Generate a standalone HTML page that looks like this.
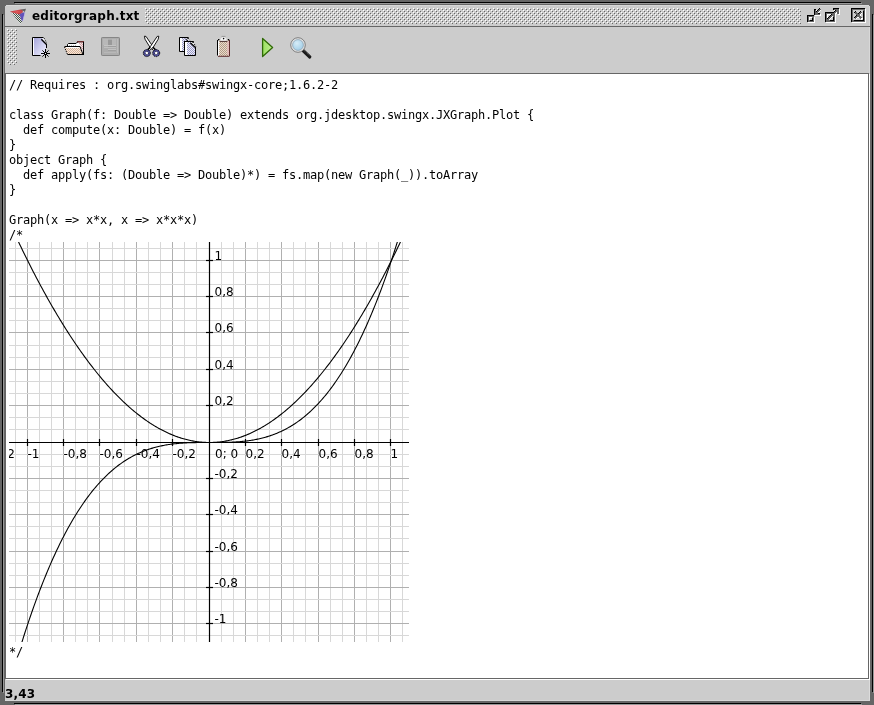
<!DOCTYPE html>
<html lang="en"><head><meta charset="utf-8"><title>editorgraph.txt</title>
<style>
html,body{margin:0;padding:0;}
body{-webkit-font-smoothing:antialiased;width:874px;height:705px;overflow:hidden;background:#666;position:relative;font-family:"DejaVu Sans","Liberation Sans",sans-serif;}
svg{position:absolute;left:0;top:0;display:block;}
.title,.status,pre.code,.graph{will-change:transform;}
.title{position:absolute;left:31.6px;top:9px;letter-spacing:0.22px;height:15px;line-height:15px;font:bold 12px/15px "DejaVu Sans","Liberation Sans",sans-serif;color:#000;white-space:pre;}
.status{position:absolute;left:5px;top:687px;letter-spacing:0.15px;font:bold 12px/15px "DejaVu Sans","Liberation Sans",sans-serif;color:#000;white-space:pre;}
pre.code{position:absolute;margin:0;left:9px;font:12px/15px "DejaVu Sans Mono","Liberation Mono",monospace;letter-spacing:-0.224px;color:#000;white-space:pre;}
#c1{top:78px;}
#c2{top:645px;}
.graph{position:absolute;left:9px;top:242px;width:400px;height:400px;overflow:hidden;background:#fff;}
.graph text{font:12px "DejaVu Sans","Liberation Sans",sans-serif;fill:#000;}
</style></head>
<body>
<svg class="chrome" width="874" height="705" viewBox="0 0 874 705" shape-rendering="crispEdges"><rect x="0" y="0" width="874" height="705" fill="#666"/><rect x="15" y="3" width="847" height="1" fill="#999"/><rect x="3" y="15" width="1" height="678" fill="#999"/><rect x="873" y="15" width="1" height="678" fill="#999"/><rect x="15" y="704" width="847" height="1" fill="#999"/><rect x="14" y="2" width="847" height="1" fill="#000"/><rect x="2" y="14" width="1" height="678" fill="#000"/><rect x="872" y="14" width="1" height="678" fill="#000"/><rect x="14" y="703" width="847" height="1" fill="#000"/><rect x="5" y="5" width="865" height="696" fill="#ccc"/><rect x="5" y="26" width="865" height="1" fill="#666"/><rect x="5" y="5" width="1" height="1" fill="#666"/><rect x="869" y="5" width="1" height="1" fill="#666"/><defs><pattern id="bp" width="4" height="4" patternUnits="userSpaceOnUse"><rect x="0" y="0" width="1" height="1" fill="#fff"/><rect x="2" y="2" width="1" height="1" fill="#fff"/><rect x="1" y="1" width="1" height="1" fill="#666"/><rect x="3" y="3" width="1" height="1" fill="#666"/></pattern></defs><g transform="translate(145,8)"><rect x="0" y="0" width="656" height="16" fill="url(#bp)"/></g><g transform="translate(7,29)"><rect x="0" y="0" width="10" height="36" fill="url(#bp)"/></g><rect x="819" y="8" width="1" height="1" fill="#000000"/><rect x="814" y="9" width="2" height="1" fill="#000000"/><rect x="818" y="9" width="1" height="1" fill="#000000"/><rect x="819" y="9" width="2" height="1" fill="#666666"/><rect x="814" y="10" width="1" height="1" fill="#000000"/><rect x="815" y="10" width="1" height="1" fill="#666666"/><rect x="816" y="10" width="1" height="1" fill="#ffffff"/><rect x="817" y="10" width="1" height="1" fill="#000000"/><rect x="818" y="10" width="2" height="1" fill="#666666"/><rect x="820" y="10" width="1" height="1" fill="#ffffff"/><rect x="814" y="11" width="1" height="1" fill="#000000"/><rect x="815" y="11" width="1" height="1" fill="#666666"/><rect x="816" y="11" width="1" height="1" fill="#000000"/><rect x="817" y="11" width="2" height="1" fill="#666666"/><rect x="819" y="11" width="1" height="1" fill="#ffffff"/><rect x="814" y="12" width="1" height="1" fill="#000000"/><rect x="815" y="12" width="3" height="1" fill="#666666"/><rect x="818" y="12" width="1" height="1" fill="#ffffff"/><rect x="814" y="13" width="1" height="1" fill="#000000"/><rect x="815" y="13" width="3" height="1" fill="#666666"/><rect x="818" y="13" width="2" height="1" fill="#000000"/><rect x="814" y="14" width="1" height="1" fill="#000000"/><rect x="815" y="14" width="5" height="1" fill="#666666"/><rect x="820" y="14" width="1" height="1" fill="#ffffff"/><rect x="807" y="15" width="7" height="1" fill="#000000"/><rect x="815" y="15" width="6" height="1" fill="#ffffff"/><rect x="807" y="16" width="1" height="1" fill="#000000"/><rect x="808" y="16" width="6" height="1" fill="#666666"/><rect x="807" y="17" width="1" height="1" fill="#000000"/><rect x="808" y="17" width="1" height="1" fill="#666666"/><rect x="809" y="17" width="3" height="1" fill="#ffffff"/><rect x="812" y="17" width="2" height="1" fill="#666666"/><rect x="814" y="17" width="1" height="1" fill="#ffffff"/><rect x="807" y="18" width="1" height="1" fill="#000000"/><rect x="808" y="18" width="1" height="1" fill="#666666"/><rect x="809" y="18" width="1" height="1" fill="#ffffff"/><rect x="812" y="18" width="1" height="1" fill="#000000"/><rect x="813" y="18" width="1" height="1" fill="#666666"/><rect x="814" y="18" width="1" height="1" fill="#ffffff"/><rect x="807" y="19" width="1" height="1" fill="#000000"/><rect x="808" y="19" width="1" height="1" fill="#666666"/><rect x="809" y="19" width="1" height="1" fill="#ffffff"/><rect x="812" y="19" width="1" height="1" fill="#000000"/><rect x="813" y="19" width="1" height="1" fill="#666666"/><rect x="814" y="19" width="1" height="1" fill="#ffffff"/><rect x="807" y="20" width="1" height="1" fill="#000000"/><rect x="808" y="20" width="2" height="1" fill="#666666"/><rect x="810" y="20" width="3" height="1" fill="#000000"/><rect x="813" y="20" width="1" height="1" fill="#666666"/><rect x="814" y="20" width="1" height="1" fill="#ffffff"/><rect x="807" y="21" width="1" height="1" fill="#000000"/><rect x="808" y="21" width="6" height="1" fill="#666666"/><rect x="814" y="21" width="1" height="1" fill="#ffffff"/><rect x="808" y="22" width="7" height="1" fill="#ffffff"/><rect x="833" y="8" width="6" height="1" fill="#000000"/><rect x="833" y="9" width="1" height="1" fill="#000000"/><rect x="834" y="9" width="5" height="1" fill="#666666"/><rect x="839" y="9" width="1" height="1" fill="#ffffff"/><rect x="834" y="10" width="1" height="1" fill="#ffffff"/><rect x="835" y="10" width="1" height="1" fill="#000000"/><rect x="836" y="10" width="3" height="1" fill="#666666"/><rect x="839" y="10" width="1" height="1" fill="#ffffff"/><rect x="834" y="11" width="1" height="1" fill="#000000"/><rect x="835" y="11" width="4" height="1" fill="#666666"/><rect x="839" y="11" width="1" height="1" fill="#ffffff"/><rect x="825" y="12" width="9" height="1" fill="#000000"/><rect x="834" y="12" width="2" height="1" fill="#666666"/><rect x="836" y="12" width="1" height="1" fill="#ffffff"/><rect x="837" y="12" width="2" height="1" fill="#666666"/><rect x="839" y="12" width="1" height="1" fill="#ffffff"/><rect x="825" y="13" width="1" height="1" fill="#000000"/><rect x="826" y="13" width="9" height="1" fill="#666666"/><rect x="835" y="13" width="2" height="1" fill="#ffffff"/><rect x="837" y="13" width="2" height="1" fill="#666666"/><rect x="839" y="13" width="1" height="1" fill="#ffffff"/><rect x="825" y="14" width="1" height="1" fill="#000000"/><rect x="826" y="14" width="1" height="1" fill="#666666"/><rect x="827" y="14" width="4" height="1" fill="#ffffff"/><rect x="831" y="14" width="1" height="1" fill="#000000"/><rect x="832" y="14" width="3" height="1" fill="#666666"/><rect x="835" y="14" width="1" height="1" fill="#ffffff"/><rect x="838" y="14" width="2" height="1" fill="#ffffff"/><rect x="825" y="15" width="1" height="1" fill="#000000"/><rect x="826" y="15" width="1" height="1" fill="#666666"/><rect x="827" y="15" width="1" height="1" fill="#ffffff"/><rect x="830" y="15" width="1" height="1" fill="#000000"/><rect x="831" y="15" width="4" height="1" fill="#666666"/><rect x="835" y="15" width="1" height="1" fill="#ffffff"/><rect x="825" y="16" width="1" height="1" fill="#000000"/><rect x="826" y="16" width="1" height="1" fill="#666666"/><rect x="827" y="16" width="1" height="1" fill="#ffffff"/><rect x="829" y="16" width="1" height="1" fill="#000000"/><rect x="830" y="16" width="2" height="1" fill="#666666"/><rect x="832" y="16" width="1" height="1" fill="#ffffff"/><rect x="833" y="16" width="2" height="1" fill="#666666"/><rect x="835" y="16" width="1" height="1" fill="#ffffff"/><rect x="825" y="17" width="1" height="1" fill="#000000"/><rect x="826" y="17" width="1" height="1" fill="#666666"/><rect x="827" y="17" width="1" height="1" fill="#ffffff"/><rect x="828" y="17" width="1" height="1" fill="#000000"/><rect x="829" y="17" width="2" height="1" fill="#666666"/><rect x="831" y="17" width="1" height="1" fill="#ffffff"/><rect x="833" y="17" width="1" height="1" fill="#000000"/><rect x="834" y="17" width="1" height="1" fill="#666666"/><rect x="835" y="17" width="1" height="1" fill="#ffffff"/><rect x="825" y="18" width="1" height="1" fill="#000000"/><rect x="826" y="18" width="1" height="1" fill="#666666"/><rect x="827" y="18" width="1" height="1" fill="#000000"/><rect x="828" y="18" width="2" height="1" fill="#666666"/><rect x="830" y="18" width="1" height="1" fill="#ffffff"/><rect x="833" y="18" width="1" height="1" fill="#000000"/><rect x="834" y="18" width="1" height="1" fill="#666666"/><rect x="835" y="18" width="1" height="1" fill="#ffffff"/><rect x="825" y="19" width="1" height="1" fill="#000000"/><rect x="826" y="19" width="3" height="1" fill="#666666"/><rect x="829" y="19" width="1" height="1" fill="#ffffff"/><rect x="833" y="19" width="1" height="1" fill="#000000"/><rect x="834" y="19" width="1" height="1" fill="#666666"/><rect x="835" y="19" width="1" height="1" fill="#ffffff"/><rect x="825" y="20" width="1" height="1" fill="#000000"/><rect x="826" y="20" width="4" height="1" fill="#666666"/><rect x="830" y="20" width="4" height="1" fill="#000000"/><rect x="834" y="20" width="1" height="1" fill="#666666"/><rect x="835" y="20" width="1" height="1" fill="#ffffff"/><rect x="825" y="21" width="1" height="1" fill="#000000"/><rect x="826" y="21" width="9" height="1" fill="#666666"/><rect x="835" y="21" width="1" height="1" fill="#ffffff"/><rect x="826" y="22" width="10" height="1" fill="#ffffff"/><rect x="851" y="8" width="14" height="1" fill="#000000"/><rect x="851" y="9" width="1" height="1" fill="#000000"/><rect x="852" y="9" width="13" height="1" fill="#666666"/><rect x="865" y="9" width="1" height="1" fill="#ffffff"/><rect x="851" y="10" width="1" height="1" fill="#000000"/><rect x="852" y="10" width="1" height="1" fill="#666666"/><rect x="863" y="10" width="2" height="1" fill="#666666"/><rect x="865" y="10" width="1" height="1" fill="#ffffff"/><rect x="851" y="11" width="1" height="1" fill="#000000"/><rect x="852" y="11" width="1" height="1" fill="#666666"/><rect x="855" y="11" width="1" height="1" fill="#000000"/><rect x="860" y="11" width="1" height="1" fill="#000000"/><rect x="863" y="11" width="1" height="1" fill="#000000"/><rect x="864" y="11" width="1" height="1" fill="#666666"/><rect x="865" y="11" width="1" height="1" fill="#ffffff"/><rect x="851" y="12" width="1" height="1" fill="#000000"/><rect x="852" y="12" width="1" height="1" fill="#666666"/><rect x="854" y="12" width="1" height="1" fill="#000000"/><rect x="855" y="12" width="2" height="1" fill="#666666"/><rect x="859" y="12" width="1" height="1" fill="#000000"/><rect x="860" y="12" width="2" height="1" fill="#666666"/><rect x="863" y="12" width="1" height="1" fill="#000000"/><rect x="864" y="12" width="1" height="1" fill="#666666"/><rect x="865" y="12" width="1" height="1" fill="#ffffff"/><rect x="851" y="13" width="1" height="1" fill="#000000"/><rect x="852" y="13" width="1" height="1" fill="#666666"/><rect x="855" y="13" width="3" height="1" fill="#666666"/><rect x="858" y="13" width="1" height="1" fill="#000000"/><rect x="859" y="13" width="2" height="1" fill="#666666"/><rect x="861" y="13" width="1" height="1" fill="#ffffff"/><rect x="863" y="13" width="1" height="1" fill="#000000"/><rect x="864" y="13" width="1" height="1" fill="#666666"/><rect x="865" y="13" width="1" height="1" fill="#ffffff"/><rect x="851" y="14" width="1" height="1" fill="#000000"/><rect x="852" y="14" width="1" height="1" fill="#666666"/><rect x="856" y="14" width="4" height="1" fill="#666666"/><rect x="860" y="14" width="1" height="1" fill="#ffffff"/><rect x="863" y="14" width="1" height="1" fill="#000000"/><rect x="864" y="14" width="1" height="1" fill="#666666"/><rect x="865" y="14" width="1" height="1" fill="#ffffff"/><rect x="851" y="15" width="1" height="1" fill="#000000"/><rect x="852" y="15" width="1" height="1" fill="#666666"/><rect x="856" y="15" width="1" height="1" fill="#000000"/><rect x="857" y="15" width="3" height="1" fill="#666666"/><rect x="860" y="15" width="1" height="1" fill="#ffffff"/><rect x="863" y="15" width="1" height="1" fill="#000000"/><rect x="864" y="15" width="1" height="1" fill="#666666"/><rect x="865" y="15" width="1" height="1" fill="#ffffff"/><rect x="851" y="16" width="1" height="1" fill="#000000"/><rect x="852" y="16" width="1" height="1" fill="#666666"/><rect x="855" y="16" width="1" height="1" fill="#000000"/><rect x="856" y="16" width="5" height="1" fill="#666666"/><rect x="863" y="16" width="1" height="1" fill="#000000"/><rect x="864" y="16" width="1" height="1" fill="#666666"/><rect x="865" y="16" width="1" height="1" fill="#ffffff"/><rect x="851" y="17" width="1" height="1" fill="#000000"/><rect x="852" y="17" width="1" height="1" fill="#666666"/><rect x="854" y="17" width="1" height="1" fill="#000000"/><rect x="855" y="17" width="2" height="1" fill="#666666"/><rect x="857" y="17" width="2" height="1" fill="#ffffff"/><rect x="859" y="17" width="3" height="1" fill="#666666"/><rect x="863" y="17" width="1" height="1" fill="#000000"/><rect x="864" y="17" width="1" height="1" fill="#666666"/><rect x="865" y="17" width="1" height="1" fill="#ffffff"/><rect x="851" y="18" width="1" height="1" fill="#000000"/><rect x="852" y="18" width="1" height="1" fill="#666666"/><rect x="855" y="18" width="1" height="1" fill="#666666"/><rect x="856" y="18" width="1" height="1" fill="#ffffff"/><rect x="860" y="18" width="1" height="1" fill="#666666"/><rect x="861" y="18" width="2" height="1" fill="#ffffff"/><rect x="863" y="18" width="1" height="1" fill="#000000"/><rect x="864" y="18" width="1" height="1" fill="#666666"/><rect x="865" y="18" width="1" height="1" fill="#ffffff"/><rect x="851" y="19" width="1" height="1" fill="#000000"/><rect x="852" y="19" width="1" height="1" fill="#666666"/><rect x="861" y="19" width="1" height="1" fill="#ffffff"/><rect x="863" y="19" width="1" height="1" fill="#000000"/><rect x="864" y="19" width="1" height="1" fill="#666666"/><rect x="865" y="19" width="1" height="1" fill="#ffffff"/><rect x="851" y="20" width="1" height="1" fill="#000000"/><rect x="852" y="20" width="2" height="1" fill="#666666"/><rect x="854" y="20" width="10" height="1" fill="#000000"/><rect x="864" y="20" width="1" height="1" fill="#666666"/><rect x="865" y="20" width="1" height="1" fill="#ffffff"/><rect x="851" y="21" width="1" height="1" fill="#000000"/><rect x="852" y="21" width="13" height="1" fill="#666666"/><rect x="865" y="21" width="1" height="1" fill="#ffffff"/><rect x="852" y="22" width="14" height="1" fill="#ffffff"/><rect x="5" y="73" width="865" height="607" fill="#fff"/><rect x="5" y="73" width="864" height="1" fill="#666"/><rect x="5" y="73" width="1" height="606" fill="#666"/><rect x="5" y="678" width="864" height="1" fill="#666"/><rect x="868" y="73" width="1" height="606" fill="#666"/><rect x="869" y="73" width="1" height="1" fill="#ccc"/><rect x="5" y="679" width="1" height="1" fill="#ccc"/><rect x="869" y="6" width="1" height="20" fill="#d8d8d8"/><rect x="869" y="27" width="1" height="46" fill="#d8d8d8"/><rect x="869" y="680" width="1" height="21" fill="#dcdcdc"/><rect x="5" y="700" width="865" height="1" fill="#d8d8d8"/><rect x="6" y="5" width="863" height="1" fill="#d8d8d8"/></svg>
<svg class="icons" width="874" height="705" viewBox="0 0 874 705"><defs><linearGradient id="gNew" x1="0" y1="0" x2="1" y2="1"><stop offset="0" stop-color="#a4a4da"/><stop offset="1" stop-color="#f2f2ff"/></linearGradient><linearGradient id="gRun" x1="0" y1="0" x2="1" y2="0"><stop offset="0" stop-color="#9be25f"/><stop offset="1" stop-color="#c2ec94"/></linearGradient><radialGradient id="gLens" cx="0.4" cy="0.35" r="0.75"><stop offset="0" stop-color="#d6ecf7"/><stop offset="1" stop-color="#9ccbe6"/></radialGradient><pattern id="dPeach" width="2" height="2" patternUnits="userSpaceOnUse"><rect width="2" height="2" fill="#fbe8d8"/><rect x="0" y="0" width="1" height="1" fill="#d2b29c"/><rect x="1" y="1" width="1" height="1" fill="#d2b29c"/></pattern><pattern id="dPink" width="2" height="2" patternUnits="userSpaceOnUse"><rect width="2" height="2" fill="#f4e4e4"/><rect x="0" y="0" width="1" height="1" fill="#d4a4a8"/><rect x="1" y="1" width="1" height="1" fill="#d4a4a8"/></pattern><pattern id="dLav" width="2" height="2" patternUnits="userSpaceOnUse"><rect width="2" height="2" fill="#ececf8"/><rect x="0" y="0" width="1" height="1" fill="#9c9cc8"/><rect x="1" y="1" width="1" height="1" fill="#9c9cc8"/></pattern><pattern id="dTan" width="2" height="2" patternUnits="userSpaceOnUse"><rect width="2" height="2" fill="#e8dccc"/><rect x="0" y="0" width="1" height="1" fill="#b49c86"/><rect x="1" y="1" width="1" height="1" fill="#b49c86"/></pattern><pattern id="dChk" width="2" height="2" patternUnits="userSpaceOnUse"><rect width="2" height="2" fill="#e8ece8"/><rect x="0" y="0" width="1" height="1" fill="#3c4a40"/><rect x="1" y="1" width="1" height="1" fill="#3c4a40"/></pattern><radialGradient id="gRed" cx="0.55" cy="0.5" r="0.6"><stop offset="0" stop-color="#e85050"/><stop offset="1" stop-color="#b02c34"/></radialGradient></defs><g opacity="0.92"><polygon points="11.3,12.5 19.5,14.1 21,19 22.2,21.4 20.6,23.9" fill="url(#dChk)"/><polygon points="10.1,11.4 15,10.4 20.6,9.5 23.1,10.5 22.5,12.7 19.9,14.4 15,13.3 10.6,12.1" fill="url(#gRed)"/><polygon points="20.4,9.4 26,8.7 24.9,12.1 23,10.7" fill="#5a5858"/><polygon points="19.6,14.3 22.5,12.7 24.8,12.2 23.3,18.8 22.2,21.5 21,19" fill="#5848b8"/><polygon points="24.8,12.2 25.3,12.4 23.3,20.4 22.5,21" fill="#b4b0ee"/></g><g><polygon points="33,38 43,38 46,42 46,55 33,55" fill="url(#gNew)"/><rect x="33" y="38" width="1" height="17" fill="#fff"/><polygon points="42,38 44,38 46.5,43.5 46,44" fill="#fff"/><g fill="none" stroke="#000" stroke-width="1"><path d="M40.5 55.5 H32.5 V37.5 H43.5"/><path d="M46.5 44 V48"/><path d="M41.3 39.3 L46.5 44.5" stroke-width="1.4"/><path d="M44 38 L46.6 43" stroke-dasharray="1 1"/></g><g stroke="#000" stroke-width="1" fill="none"><path d="M41 53.5 H50 M45.5 49 V58 M42.4 50.4 L48.6 56.6 M48.6 50.4 L42.4 56.6"/></g><rect x="45" y="53" width="1" height="1" fill="#fff"/></g><g><polygon points="68,44 76,44 78,42 83,42 83,54 68,54" fill="#fff"/><polygon points="78.5,43 83,43 83,52 80.3,46" fill="url(#dPink)"/><path d="M69 45.5 H76" stroke="#bbb" stroke-width="1" stroke-dasharray="1 1"/><rect x="77" y="41" width="7" height="1.6" fill="#6b2f2f"/><g fill="none" stroke="#000" stroke-width="1"><path d="M67.5 46 V44.5 L68.5 43.5 H76 L77.5 42"/><path d="M83.5 42 V55"/></g><polygon points="64.5,46.5 80,46.5 83,54.5 67.5,54.5" fill="url(#dPeach)"/><polygon points="65.5,47 79.5,47 80,48 66,48" fill="#fff"/><g fill="none" stroke="#000" stroke-width="1"><path d="M64.5 46.5 H80 L83 54.5 H67.5"/><path d="M64.5 47 L67.5 54.5" stroke-dasharray="1.2 1"/></g></g><g><rect x="101" y="37" width="19" height="19" rx="1.2" fill="#adadad"/><rect x="101.5" y="37.5" width="18" height="18" rx="1.2" fill="none" stroke="#868686" stroke-width="1"/><rect x="103" y="39" width="5" height="6" fill="#b8b8b8"/><rect x="112" y="39" width="4" height="6" fill="#b8b8b8"/><rect x="108" y="40" width="4" height="5" fill="#999"/><rect x="117" y="39" width="1" height="14" fill="#bcbcbc"/><rect x="104" y="45" width="12" height="1" fill="#c4c4c4"/><rect x="108" y="46" width="8" height="1" fill="#9e9e9e"/><rect x="104" y="47" width="12" height="1" fill="#c0c0c0"/><rect x="108" y="49" width="8" height="1" fill="#c2c2c2"/><rect x="108" y="50" width="8" height="1" fill="#a0a0a0"/><rect x="104" y="52" width="12" height="1" fill="#b8b8b8"/></g><g><polygon points="144.4,36.2 146,36.4 152.6,46.2 155.2,49.8 153.6,50.4 150.2,47.6 145,39.2" fill="#fff" stroke="#000" stroke-width="0.9" stroke-linejoin="round"/><polygon points="158.8,36.2 157.2,36.4 150.6,46.2 148,49.8 149.6,50.4 153,47.6 158.2,39.2" fill="#fff" stroke="#000" stroke-width="0.9" stroke-linejoin="round"/><path d="M150.4 47.2 L147.6 49.8 M152.8 47.2 L155.6 49.8" stroke="#000" stroke-width="1.5" fill="none"/><circle cx="146.8" cy="53.1" r="2.5" fill="#fff" stroke="#50509c" stroke-width="2"/><circle cx="156.2" cy="53.1" r="2.5" fill="#fff" stroke="#50509c" stroke-width="2"/><circle cx="146.8" cy="53.1" r="3.5" fill="none" stroke="#000" stroke-width="0.9" stroke-dasharray="1.5 0.7"/><circle cx="156.2" cy="53.1" r="3.5" fill="none" stroke="#000" stroke-width="0.9" stroke-dasharray="1.5 0.7"/><circle cx="146.8" cy="53.1" r="1.6" fill="none" stroke="#000" stroke-width="0.7" stroke-dasharray="1 0.8"/><circle cx="156.2" cy="53.1" r="1.6" fill="none" stroke="#000" stroke-width="0.7" stroke-dasharray="1 0.8"/></g><g><polygon points="180,38 187,38 190,41 190,51 180,51" fill="url(#dLav)"/><rect x="180" y="38" width="2" height="13" fill="#fff"/><polygon points="186,38 188,38 190,40 190,42" fill="#fff"/><g fill="none" stroke="#000" stroke-width="1"><path d="M184.5 51.5 H179.5 V37.5 H187.5 M185.6 39 L188.5 41.5"/><path d="M188 38 L189.8 40.5" stroke-dasharray="1 1"/></g><rect x="187" y="37" width="1.6" height="1.6" fill="#000"/><polygon points="185,42 193,42 195.5,46 195.5,55 185,55" fill="url(#dLav)"/><rect x="185" y="42" width="2" height="13" fill="#fff"/><polygon points="190.5,42 193.5,42 196,46.5 195.5,47.5" fill="#fff"/><g fill="none" stroke="#000" stroke-width="1"><path d="M184.5 41.5 H193 M184.5 41 V55.5 H195.5 V47"/><path d="M190.3 42.8 L195.4 47.6" stroke-width="1.4"/><path d="M193.3 42.3 L195.8 46.5" stroke-dasharray="1 1"/></g><rect x="192" y="41" width="1.8" height="1.6" fill="#000"/></g><g><rect x="218" y="40" width="11" height="16" fill="url(#dTan)"/><rect x="218" y="40" width="1.2" height="16" fill="#fff"/><rect x="227" y="41" width="2" height="14" fill="#e6bcbc" opacity="0.8"/><path d="M217.5 40 V55.5" stroke="#000" stroke-width="1" fill="none"/><path d="M229.5 40 V56 M218 56.3 H229.5" stroke="#5e2b2b" stroke-width="1" fill="none"/><rect x="218" y="39" width="1.4" height="1.4" fill="#000"/><rect x="227.8" y="39" width="1.4" height="1.4" fill="#000"/><path d="M220 41 L221 38.5 Q223.5 35.6 226 38.5 L227 41 Z" fill="#f4f4f4"/><path d="M221.5 36.4 H225.5" stroke="#999" stroke-width="1"/><path d="M219.8 41.4 H227.4" stroke="#4a3030" stroke-width="1"/><circle cx="223.6" cy="38.6" r="0.8" fill="#000"/></g><polygon points="262.6,38.4 272.6,47.5 262.6,56.6" fill="url(#gRun)" stroke="#2f6a06" stroke-width="1.3" stroke-linejoin="round"/><g><path d="M303 50.5 L309.8 57" stroke="#1a1a1a" stroke-width="3.2" stroke-linecap="round"/><path d="M304.2 50.5 L310 56" stroke="#777" stroke-width="0.8" stroke-dasharray="1 1"/><circle cx="298" cy="45" r="7.3" fill="#e4e4e4" stroke="#7e7e7e" stroke-width="1"/><circle cx="298" cy="45" r="5.4" fill="url(#gLens)" stroke="#90a4b4" stroke-width="0.8"/></g></svg>
<div class="title">editorgraph.txt</div>
<pre class="code" id="c1">// Requires : org.swinglabs#swingx-core;1.6.2-2

class Graph(f: Double =&gt; Double) extends org.jdesktop.swingx.JXGraph.Plot {
  def compute(x: Double) = f(x)
}
object Graph {
  def apply(fs: (Double =&gt; Double)*) = fs.map(new Graph(_)).toArray
}

Graph(x =&gt; x*x, x =&gt; x*x*x)
/*</pre>
<div class="graph"><svg width="400" height="400" viewBox="0 0 400 400"><rect width="400" height="400" fill="#fff"/><g shape-rendering="crispEdges"><rect x="6" y="0" width="1" height="400" fill="#d8d8d8"/><rect x="18" y="0" width="1" height="400" fill="#d8d8d8"/><rect x="30" y="0" width="1" height="400" fill="#d8d8d8"/><rect x="42" y="0" width="1" height="400" fill="#d8d8d8"/><rect x="54" y="0" width="1" height="400" fill="#d8d8d8"/><rect x="66" y="0" width="1" height="400" fill="#d8d8d8"/><rect x="78" y="0" width="1" height="400" fill="#d8d8d8"/><rect x="90" y="0" width="1" height="400" fill="#d8d8d8"/><rect x="103" y="0" width="1" height="400" fill="#d8d8d8"/><rect x="115" y="0" width="1" height="400" fill="#d8d8d8"/><rect x="127" y="0" width="1" height="400" fill="#d8d8d8"/><rect x="139" y="0" width="1" height="400" fill="#d8d8d8"/><rect x="151" y="0" width="1" height="400" fill="#d8d8d8"/><rect x="163" y="0" width="1" height="400" fill="#d8d8d8"/><rect x="175" y="0" width="1" height="400" fill="#d8d8d8"/><rect x="187" y="0" width="1" height="400" fill="#d8d8d8"/><rect x="212" y="0" width="1" height="400" fill="#d8d8d8"/><rect x="224" y="0" width="1" height="400" fill="#d8d8d8"/><rect x="236" y="0" width="1" height="400" fill="#d8d8d8"/><rect x="248" y="0" width="1" height="400" fill="#d8d8d8"/><rect x="260" y="0" width="1" height="400" fill="#d8d8d8"/><rect x="272" y="0" width="1" height="400" fill="#d8d8d8"/><rect x="284" y="0" width="1" height="400" fill="#d8d8d8"/><rect x="296" y="0" width="1" height="400" fill="#d8d8d8"/><rect x="309" y="0" width="1" height="400" fill="#d8d8d8"/><rect x="321" y="0" width="1" height="400" fill="#d8d8d8"/><rect x="333" y="0" width="1" height="400" fill="#d8d8d8"/><rect x="345" y="0" width="1" height="400" fill="#d8d8d8"/><rect x="357" y="0" width="1" height="400" fill="#d8d8d8"/><rect x="369" y="0" width="1" height="400" fill="#d8d8d8"/><rect x="381" y="0" width="1" height="400" fill="#d8d8d8"/><rect x="393" y="0" width="1" height="400" fill="#d8d8d8"/><rect x="236" y="0" width="1" height="400" fill="#b0b0b0"/><rect x="272" y="0" width="1" height="400" fill="#b0b0b0"/><rect x="309" y="0" width="1" height="400" fill="#b0b0b0"/><rect x="345" y="0" width="1" height="400" fill="#b0b0b0"/><rect x="381" y="0" width="1" height="400" fill="#b0b0b0"/><rect x="163" y="0" width="1" height="400" fill="#b0b0b0"/><rect x="127" y="0" width="1" height="400" fill="#b0b0b0"/><rect x="90" y="0" width="1" height="400" fill="#b0b0b0"/><rect x="54" y="0" width="1" height="400" fill="#b0b0b0"/><rect x="18" y="0" width="1" height="400" fill="#b0b0b0"/><rect x="0" y="6" width="400" height="1" fill="#d8d8d8"/><rect x="0" y="18" width="400" height="1" fill="#d8d8d8"/><rect x="0" y="30" width="400" height="1" fill="#d8d8d8"/><rect x="0" y="42" width="400" height="1" fill="#d8d8d8"/><rect x="0" y="54" width="400" height="1" fill="#d8d8d8"/><rect x="0" y="66" width="400" height="1" fill="#d8d8d8"/><rect x="0" y="78" width="400" height="1" fill="#d8d8d8"/><rect x="0" y="90" width="400" height="1" fill="#d8d8d8"/><rect x="0" y="103" width="400" height="1" fill="#d8d8d8"/><rect x="0" y="115" width="400" height="1" fill="#d8d8d8"/><rect x="0" y="127" width="400" height="1" fill="#d8d8d8"/><rect x="0" y="139" width="400" height="1" fill="#d8d8d8"/><rect x="0" y="151" width="400" height="1" fill="#d8d8d8"/><rect x="0" y="163" width="400" height="1" fill="#d8d8d8"/><rect x="0" y="175" width="400" height="1" fill="#d8d8d8"/><rect x="0" y="187" width="400" height="1" fill="#d8d8d8"/><rect x="0" y="212" width="400" height="1" fill="#d8d8d8"/><rect x="0" y="224" width="400" height="1" fill="#d8d8d8"/><rect x="0" y="236" width="400" height="1" fill="#d8d8d8"/><rect x="0" y="248" width="400" height="1" fill="#d8d8d8"/><rect x="0" y="260" width="400" height="1" fill="#d8d8d8"/><rect x="0" y="272" width="400" height="1" fill="#d8d8d8"/><rect x="0" y="284" width="400" height="1" fill="#d8d8d8"/><rect x="0" y="296" width="400" height="1" fill="#d8d8d8"/><rect x="0" y="309" width="400" height="1" fill="#d8d8d8"/><rect x="0" y="321" width="400" height="1" fill="#d8d8d8"/><rect x="0" y="333" width="400" height="1" fill="#d8d8d8"/><rect x="0" y="345" width="400" height="1" fill="#d8d8d8"/><rect x="0" y="357" width="400" height="1" fill="#d8d8d8"/><rect x="0" y="369" width="400" height="1" fill="#d8d8d8"/><rect x="0" y="381" width="400" height="1" fill="#d8d8d8"/><rect x="0" y="393" width="400" height="1" fill="#d8d8d8"/><rect x="0" y="163" width="400" height="1" fill="#b0b0b0"/><rect x="0" y="127" width="400" height="1" fill="#b0b0b0"/><rect x="0" y="90" width="400" height="1" fill="#b0b0b0"/><rect x="0" y="54" width="400" height="1" fill="#b0b0b0"/><rect x="0" y="18" width="400" height="1" fill="#b0b0b0"/><rect x="0" y="236" width="400" height="1" fill="#b0b0b0"/><rect x="0" y="272" width="400" height="1" fill="#b0b0b0"/><rect x="0" y="309" width="400" height="1" fill="#b0b0b0"/><rect x="0" y="345" width="400" height="1" fill="#b0b0b0"/><rect x="0" y="381" width="400" height="1" fill="#b0b0b0"/></g><g stroke="#000" stroke-width="1.2"><line x1="236.5" y1="197.0" x2="236.5" y2="204.0"/><line x1="272.5" y1="197.0" x2="272.5" y2="204.0"/><line x1="309.5" y1="197.0" x2="309.5" y2="204.0"/><line x1="345.5" y1="197.0" x2="345.5" y2="204.0"/><line x1="381.5" y1="197.0" x2="381.5" y2="204.0"/><line x1="418.5" y1="197.0" x2="418.5" y2="204.0"/><line x1="163.5" y1="197.0" x2="163.5" y2="204.0"/><line x1="127.5" y1="197.0" x2="127.5" y2="204.0"/><line x1="90.5" y1="197.0" x2="90.5" y2="204.0"/><line x1="54.5" y1="197.0" x2="54.5" y2="204.0"/><line x1="18.5" y1="197.0" x2="18.5" y2="204.0"/><line x1="-17.5" y1="197.0" x2="-17.5" y2="204.0"/><line x1="197.0" y1="163.5" x2="204.0" y2="163.5"/><line x1="197.0" y1="127.5" x2="204.0" y2="127.5"/><line x1="197.0" y1="90.5" x2="204.0" y2="90.5"/><line x1="197.0" y1="54.5" x2="204.0" y2="54.5"/><line x1="197.0" y1="18.5" x2="204.0" y2="18.5"/><line x1="197.0" y1="-17.5" x2="204.0" y2="-17.5"/><line x1="197.0" y1="236.5" x2="204.0" y2="236.5"/><line x1="197.0" y1="272.5" x2="204.0" y2="272.5"/><line x1="197.0" y1="309.5" x2="204.0" y2="309.5"/><line x1="197.0" y1="345.5" x2="204.0" y2="345.5"/><line x1="197.0" y1="381.5" x2="204.0" y2="381.5"/><line x1="197.0" y1="418.5" x2="204.0" y2="418.5"/><line x1="0" y1="200.5" x2="400" y2="200.5"/><line x1="200.5" y1="0" x2="200.5" y2="400"/></g><g fill="none" stroke="#000" stroke-width="1.1" stroke-linejoin="round"><polyline points="0.50,-19.50 1.50,-17.31 2.50,-15.12 3.50,-12.95 4.50,-10.79 5.50,-8.64 6.50,-6.50 7.50,-4.37 8.50,-2.25 9.50,-0.15 10.50,1.95 11.50,4.03 12.50,6.11 13.50,8.17 14.50,10.22 15.50,12.26 16.50,14.29 17.50,16.31 18.50,18.32 19.50,20.31 20.50,22.30 21.50,24.27 22.50,26.24 23.50,28.19 24.50,30.13 25.50,32.06 26.50,33.98 27.50,35.89 28.50,37.79 29.50,39.67 30.50,41.55 31.50,43.41 32.50,45.27 33.50,47.11 34.50,48.94 35.50,50.76 36.50,52.57 37.50,54.37 38.50,56.16 39.50,57.93 40.50,59.70 41.50,61.45 42.50,63.20 43.50,64.93 44.50,66.65 45.50,68.36 46.50,70.06 47.50,71.75 48.50,73.43 49.50,75.09 50.50,76.75 51.50,78.39 52.50,80.03 53.50,81.65 54.50,83.26 55.50,84.86 56.50,86.45 57.50,88.03 58.50,89.60 59.50,91.15 60.50,92.70 61.50,94.23 62.50,95.76 63.50,97.27 64.50,98.77 65.50,100.26 66.50,101.74 67.50,103.21 68.50,104.67 69.50,106.11 70.50,107.55 71.50,108.97 72.50,110.39 73.50,111.79 74.50,113.18 75.50,114.56 76.50,115.93 77.50,117.29 78.50,118.64 79.50,119.97 80.50,121.30 81.50,122.61 82.50,123.92 83.50,125.21 84.50,126.49 85.50,127.76 86.50,129.02 87.50,130.27 88.50,131.51 89.50,132.73 90.50,133.95 91.50,135.15 92.50,136.35 93.50,137.53 94.50,138.70 95.50,139.86 96.50,141.01 97.50,142.15 98.50,143.28 99.50,144.39 100.50,145.50 101.50,146.59 102.50,147.68 103.50,148.75 104.50,149.81 105.50,150.86 106.50,151.90 107.50,152.93 108.50,153.95 109.50,154.95 110.50,155.95 111.50,156.93 112.50,157.91 113.50,158.87 114.50,159.82 115.50,160.76 116.50,161.69 117.50,162.61 118.50,163.52 119.50,164.41 120.50,165.30 121.50,166.17 122.50,167.04 123.50,167.89 124.50,168.73 125.50,169.56 126.50,170.38 127.50,171.19 128.50,171.99 129.50,172.77 130.50,173.55 131.50,174.31 132.50,175.07 133.50,175.81 134.50,176.54 135.50,177.26 136.50,177.97 137.50,178.67 138.50,179.36 139.50,180.03 140.50,180.70 141.50,181.35 142.50,182.00 143.50,182.63 144.50,183.25 145.50,183.86 146.50,184.46 147.50,185.05 148.50,185.63 149.50,186.19 150.50,186.75 151.50,187.29 152.50,187.83 153.50,188.35 154.50,188.86 155.50,189.36 156.50,189.85 157.50,190.33 158.50,190.80 159.50,191.25 160.50,191.70 161.50,192.13 162.50,192.56 163.50,192.97 164.50,193.37 165.50,193.76 166.50,194.14 167.50,194.51 168.50,194.87 169.50,195.21 170.50,195.55 171.50,195.87 172.50,196.19 173.50,196.49 174.50,196.78 175.50,197.06 176.50,197.33 177.50,197.59 178.50,197.84 179.50,198.07 180.50,198.30 181.50,198.51 182.50,198.72 183.50,198.91 184.50,199.09 185.50,199.26 186.50,199.42 187.50,199.57 188.50,199.71 189.50,199.83 190.50,199.95 191.50,200.05 192.50,200.15 193.50,200.23 194.50,200.30 195.50,200.36 196.50,200.41 197.50,200.45 198.50,200.48 199.50,200.49 200.50,200.50 201.50,200.49 202.50,200.48 203.50,200.45 204.50,200.41 205.50,200.36 206.50,200.30 207.50,200.23 208.50,200.15 209.50,200.05 210.50,199.95 211.50,199.83 212.50,199.71 213.50,199.57 214.50,199.42 215.50,199.26 216.50,199.09 217.50,198.91 218.50,198.72 219.50,198.51 220.50,198.30 221.50,198.07 222.50,197.84 223.50,197.59 224.50,197.33 225.50,197.06 226.50,196.78 227.50,196.49 228.50,196.19 229.50,195.87 230.50,195.55 231.50,195.21 232.50,194.87 233.50,194.51 234.50,194.14 235.50,193.76 236.50,193.37 237.50,192.97 238.50,192.56 239.50,192.13 240.50,191.70 241.50,191.25 242.50,190.80 243.50,190.33 244.50,189.85 245.50,189.36 246.50,188.86 247.50,188.35 248.50,187.83 249.50,187.29 250.50,186.75 251.50,186.19 252.50,185.63 253.50,185.05 254.50,184.46 255.50,183.86 256.50,183.25 257.50,182.63 258.50,182.00 259.50,181.35 260.50,180.70 261.50,180.03 262.50,179.36 263.50,178.67 264.50,177.97 265.50,177.26 266.50,176.54 267.50,175.81 268.50,175.07 269.50,174.31 270.50,173.55 271.50,172.77 272.50,171.99 273.50,171.19 274.50,170.38 275.50,169.56 276.50,168.73 277.50,167.89 278.50,167.04 279.50,166.17 280.50,165.30 281.50,164.41 282.50,163.52 283.50,162.61 284.50,161.69 285.50,160.76 286.50,159.82 287.50,158.87 288.50,157.91 289.50,156.93 290.50,155.95 291.50,154.95 292.50,153.95 293.50,152.93 294.50,151.90 295.50,150.86 296.50,149.81 297.50,148.75 298.50,147.68 299.50,146.59 300.50,145.50 301.50,144.39 302.50,143.28 303.50,142.15 304.50,141.01 305.50,139.86 306.50,138.70 307.50,137.53 308.50,136.35 309.50,135.15 310.50,133.95 311.50,132.73 312.50,131.51 313.50,130.27 314.50,129.02 315.50,127.76 316.50,126.49 317.50,125.21 318.50,123.92 319.50,122.61 320.50,121.30 321.50,119.97 322.50,118.64 323.50,117.29 324.50,115.93 325.50,114.56 326.50,113.18 327.50,111.79 328.50,110.39 329.50,108.97 330.50,107.55 331.50,106.11 332.50,104.67 333.50,103.21 334.50,101.74 335.50,100.26 336.50,98.77 337.50,97.27 338.50,95.76 339.50,94.23 340.50,92.70 341.50,91.15 342.50,89.60 343.50,88.03 344.50,86.45 345.50,84.86 346.50,83.26 347.50,81.65 348.50,80.03 349.50,78.39 350.50,76.75 351.50,75.09 352.50,73.43 353.50,71.75 354.50,70.06 355.50,68.36 356.50,66.65 357.50,64.93 358.50,63.20 359.50,61.45 360.50,59.70 361.50,57.93 362.50,56.16 363.50,54.37 364.50,52.57 365.50,50.76 366.50,48.94 367.50,47.11 368.50,45.27 369.50,43.41 370.50,41.55 371.50,39.67 372.50,37.79 373.50,35.89 374.50,33.98 375.50,32.06 376.50,30.13 377.50,28.19 378.50,26.24 379.50,24.27 380.50,22.30 381.50,20.31 382.50,18.32 383.50,16.31 384.50,14.29 385.50,12.26 386.50,10.22 387.50,8.17 388.50,6.11 389.50,4.03 390.50,1.95 391.50,-0.15 392.50,-2.25 393.50,-4.37 394.50,-6.50 395.50,-8.64 396.50,-10.79 397.50,-12.95 398.50,-15.12 399.50,-17.31"/><polyline points="0.50,442.50 1.50,438.89 2.50,435.31 3.50,431.77 4.50,428.27 5.50,424.80 6.50,421.37 7.50,417.97 8.50,414.61 9.50,411.28 10.50,407.98 11.50,404.73 12.50,401.50 13.50,398.31 14.50,395.15 15.50,392.03 16.50,388.94 17.50,385.89 18.50,382.86 19.50,379.87 20.50,376.92 21.50,373.99 22.50,371.10 23.50,368.24 24.50,365.42 25.50,362.62 26.50,359.86 27.50,357.13 28.50,354.43 29.50,351.76 30.50,349.12 31.50,346.51 32.50,343.93 33.50,341.39 34.50,338.87 35.50,336.39 36.50,333.93 37.50,331.51 38.50,329.11 39.50,326.74 40.50,324.40 41.50,322.10 42.50,319.82 43.50,317.56 44.50,315.34 45.50,313.15 46.50,310.98 47.50,308.84 48.50,306.73 49.50,304.65 50.50,302.59 51.50,300.57 52.50,298.56 53.50,296.59 54.50,294.64 55.50,292.72 56.50,290.83 57.50,288.96 58.50,287.11 59.50,285.30 60.50,283.51 61.50,281.74 62.50,280.00 63.50,278.28 64.50,276.59 65.50,274.93 66.50,273.28 67.50,271.67 68.50,270.07 69.50,268.50 70.50,266.96 71.50,265.44 72.50,263.94 73.50,262.46 74.50,261.01 75.50,259.58 76.50,258.18 77.50,256.79 78.50,255.43 79.50,254.09 80.50,252.77 81.50,251.48 82.50,250.20 83.50,248.95 84.50,247.72 85.50,246.51 86.50,245.32 87.50,244.15 88.50,243.00 89.50,241.87 90.50,240.76 91.50,239.67 92.50,238.61 93.50,237.56 94.50,236.53 95.50,235.52 96.50,234.53 97.50,233.55 98.50,232.60 99.50,231.67 100.50,230.75 101.50,229.85 102.50,228.97 103.50,228.11 104.50,227.26 105.50,226.44 106.50,225.63 107.50,224.83 108.50,224.06 109.50,223.30 110.50,222.55 111.50,221.83 112.50,221.11 113.50,220.42 114.50,219.74 115.50,219.08 116.50,218.43 117.50,217.80 118.50,217.18 119.50,216.58 120.50,215.99 121.50,215.41 122.50,214.86 123.50,214.31 124.50,213.78 125.50,213.26 126.50,212.76 127.50,212.27 128.50,211.79 129.50,211.33 130.50,210.88 131.50,210.44 132.50,210.01 133.50,209.60 134.50,209.20 135.50,208.81 136.50,208.43 137.50,208.06 138.50,207.71 139.50,207.37 140.50,207.03 141.50,206.71 142.50,206.40 143.50,206.10 144.50,205.81 145.50,205.53 146.50,205.26 147.50,205.00 148.50,204.75 149.50,204.51 150.50,204.28 151.50,204.06 152.50,203.85 153.50,203.64 154.50,203.44 155.50,203.26 156.50,203.08 157.50,202.91 158.50,202.74 159.50,202.58 160.50,202.44 161.50,202.29 162.50,202.16 163.50,202.03 164.50,201.91 165.50,201.80 166.50,201.69 167.50,201.59 168.50,201.49 169.50,201.40 170.50,201.32 171.50,201.24 172.50,201.16 173.50,201.10 174.50,201.03 175.50,200.97 176.50,200.92 177.50,200.87 178.50,200.82 179.50,200.78 180.50,200.74 181.50,200.71 182.50,200.68 183.50,200.65 184.50,200.62 185.50,200.60 186.50,200.58 187.50,200.57 188.50,200.55 189.50,200.54 190.50,200.53 191.50,200.52 192.50,200.52 193.50,200.51 194.50,200.51 195.50,200.50 196.50,200.50 197.50,200.50 198.50,200.50 199.50,200.50 200.50,200.50 201.50,200.50 202.50,200.50 203.50,200.50 204.50,200.50 205.50,200.50 206.50,200.49 207.50,200.49 208.50,200.48 209.50,200.48 210.50,200.47 211.50,200.46 212.50,200.45 213.50,200.43 214.50,200.42 215.50,200.40 216.50,200.38 217.50,200.35 218.50,200.32 219.50,200.29 220.50,200.26 221.50,200.22 222.50,200.18 223.50,200.13 224.50,200.08 225.50,200.03 226.50,199.97 227.50,199.90 228.50,199.84 229.50,199.76 230.50,199.68 231.50,199.60 232.50,199.51 233.50,199.41 234.50,199.31 235.50,199.20 236.50,199.09 237.50,198.97 238.50,198.84 239.50,198.71 240.50,198.56 241.50,198.42 242.50,198.26 243.50,198.09 244.50,197.92 245.50,197.74 246.50,197.56 247.50,197.36 248.50,197.15 249.50,196.94 250.50,196.72 251.50,196.49 252.50,196.25 253.50,196.00 254.50,195.74 255.50,195.47 256.50,195.19 257.50,194.90 258.50,194.60 259.50,194.29 260.50,193.97 261.50,193.63 262.50,193.29 263.50,192.94 264.50,192.57 265.50,192.19 266.50,191.80 267.50,191.40 268.50,190.99 269.50,190.56 270.50,190.12 271.50,189.67 272.50,189.21 273.50,188.73 274.50,188.24 275.50,187.74 276.50,187.22 277.50,186.69 278.50,186.14 279.50,185.59 280.50,185.01 281.50,184.42 282.50,183.82 283.50,183.20 284.50,182.57 285.50,181.92 286.50,181.26 287.50,180.58 288.50,179.89 289.50,179.17 290.50,178.45 291.50,177.70 292.50,176.94 293.50,176.17 294.50,175.37 295.50,174.56 296.50,173.74 297.50,172.89 298.50,172.03 299.50,171.15 300.50,170.25 301.50,169.33 302.50,168.40 303.50,167.45 304.50,166.47 305.50,165.48 306.50,164.47 307.50,163.44 308.50,162.39 309.50,161.33 310.50,160.24 311.50,159.13 312.50,158.00 313.50,156.85 314.50,155.68 315.50,154.49 316.50,153.28 317.50,152.05 318.50,150.80 319.50,149.52 320.50,148.23 321.50,146.91 322.50,145.57 323.50,144.21 324.50,142.82 325.50,141.42 326.50,139.99 327.50,138.54 328.50,137.06 329.50,135.56 330.50,134.04 331.50,132.50 332.50,130.93 333.50,129.33 334.50,127.72 335.50,126.07 336.50,124.41 337.50,122.72 338.50,121.00 339.50,119.26 340.50,117.49 341.50,115.70 342.50,113.89 343.50,112.04 344.50,110.17 345.50,108.28 346.50,106.36 347.50,104.41 348.50,102.44 349.50,100.43 350.50,98.41 351.50,96.35 352.50,94.27 353.50,92.16 354.50,90.02 355.50,87.85 356.50,85.66 357.50,83.44 358.50,81.18 359.50,78.90 360.50,76.60 361.50,74.26 362.50,71.89 363.50,69.49 364.50,67.07 365.50,64.61 366.50,62.13 367.50,59.61 368.50,57.07 369.50,54.49 370.50,51.88 371.50,49.24 372.50,46.57 373.50,43.87 374.50,41.14 375.50,38.38 376.50,35.58 377.50,32.76 378.50,29.90 379.50,27.01 380.50,24.08 381.50,21.13 382.50,18.14 383.50,15.11 384.50,12.06 385.50,8.97 386.50,5.85 387.50,2.69 388.50,-0.50 389.50,-3.73 390.50,-6.98 391.50,-10.28 392.50,-13.61 393.50,-16.97 394.50,-20.37 395.50,-23.80 396.50,-27.27 397.50,-30.77 398.50,-34.31 399.50,-37.89"/></g><text x="236.5" y="216">0,2</text><text x="272.5" y="216">0,4</text><text x="309.5" y="216">0,6</text><text x="345.5" y="216">0,8</text><text x="381.5" y="216">1</text><text x="418.5" y="216">1,2</text><text x="163.5" y="216">-0,2</text><text x="127.5" y="216">-0,4</text><text x="90.5" y="216">-0,6</text><text x="54.5" y="216">-0,8</text><text x="18.5" y="216">-1</text><text x="-17.5" y="216">-1,2</text><text x="205.5" y="163">0,2</text><text x="205.5" y="127">0,4</text><text x="205.5" y="90">0,6</text><text x="205.5" y="54">0,8</text><text x="205.5" y="18">1</text><text x="205.5" y="-18">1,2</text><text x="205.5" y="236">-0,2</text><text x="205.5" y="272">-0,4</text><text x="205.5" y="309">-0,6</text><text x="205.5" y="345">-0,8</text><text x="205.5" y="381">-1</text><text x="205.5" y="418">-1,2</text><text x="206" y="216">0; 0</text></svg></div>
<pre class="code" id="c2">*/</pre>
<div class="status">3,43</div>
</body></html>
